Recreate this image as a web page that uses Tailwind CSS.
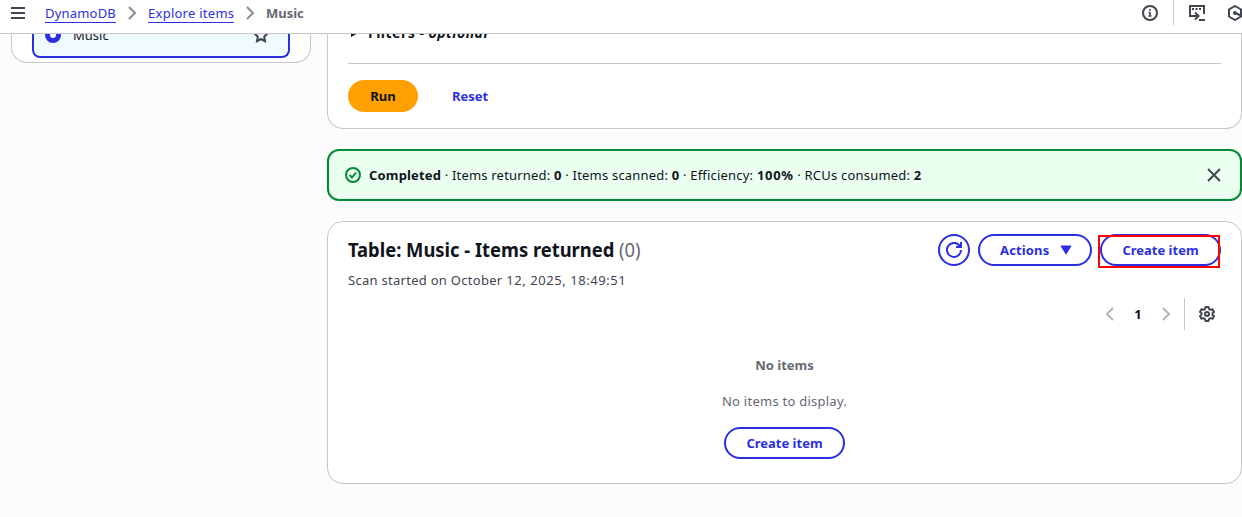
<!DOCTYPE html>
<html lang="en">
<head>
<meta charset="utf-8">
<title>DynamoDB - Explore items</title>
<script src="https://cdn.jsdelivr.net/npm/@tailwindcss/browser@4"></script>
</head>
<body class="w-[1242px] h-[517px] overflow-hidden bg-[#fcfcfd] font-['Noto_Sans',sans-serif] text-[13px] leading-5 text-[#0f141a] flex flex-col">
<header class="h-[34px] shrink-0 bg-white border-b border-[#c6c6cd] flex items-start">
  <svg class="w-4 h-4 ml-[10px] mt-[5px] text-[#424650]" viewBox="0 0 16 16" fill="none" stroke="currentColor" stroke-width="2"><path d="M1 3h14M1 8h14M1 13h14"/></svg>
  <nav class="flex items-start ml-[19px] mt-[3px]">
    <a class="w-[71px] h-5 whitespace-nowrap tracking-[0.2px] text-[#2b2fe0] border-b border-[#2b2fe0]">DynamoDB</a>
    <svg class="w-4 h-4 ml-2 mr-2 mt-[2px]" viewBox="0 0 16 16" fill="none" stroke="#8c8c94" stroke-width="2"><path d="M5 2l6 6-6 6"/></svg>
    <a class="w-[86px] h-5 whitespace-nowrap tracking-[0.26px] text-[#2b2fe0] border-b border-[#2b2fe0]">Explore items</a>
    <svg class="w-4 h-4 ml-2 mr-2 mt-[2px]" viewBox="0 0 16 16" fill="none" stroke="#8c8c94" stroke-width="2"><path d="M5 2l6 6-6 6"/></svg>
    <span class="font-bold text-[#656871]">Music</span>
  </nav>
  <div class="ml-auto flex items-start text-[#424650] w-[100px] shrink-0">
    <svg class="w-4 h-4 mt-[5px] shrink-0" viewBox="0 0 16 16" fill="none" stroke="currentColor" stroke-width="2"><circle cx="8" cy="8" r="7"/><path d="M8 7v4M6.500 11h3M6.500 7.500h1.500M8 4v2" stroke-width="1.500"/></svg>
    <div class="w-px h-[25px] bg-[#c6c6cd] ml-[15px] shrink-0"></div>
    <svg class="w-4 h-4 ml-[15px] mt-[5px] shrink-0" viewBox="0 0 16 16" fill="none" stroke="currentColor" stroke-width="2"><path d="M4 11H1V1h14v8M3 4h2M6.500 4h2M10 4h2M3 11h6M6 7.500l3.500 3.500L6 14.500M10 15h6"/></svg>
    <svg class="w-4 h-4 ml-[22px] mt-[5px] shrink-0" viewBox="0 0 16 16" fill="none" stroke="currentColor" stroke-width="2"><path d="M8 1l6 3.500v7L8 15l-6-3.500v-7z"/><circle cx="8" cy="8" r="2" fill="currentColor" stroke="none"/><path d="M8 8l6 2.500"/></svg>
  </div>
</header>
<main class="flex flex-1 min-h-0 items-start">
  <aside class="w-[300px] h-[29px] ml-[11px] shrink-0 bg-white border border-t-0 border-[#c6c6cd] rounded-b-[16px] overflow-hidden flex justify-center">
    <div class="w-[258px] h-6 bg-[#f0fbff] border-2 border-t-0 border-[#2b2fe0] rounded-b-lg flex items-start overflow-hidden">
      <div class="w-4 h-4 rounded-full border-[5px] border-[#2b2fe0] bg-white ml-[11px] -mt-[7px]"></div>
      <span class="ml-3 -mt-[9px]">Music</span>
      <svg class="w-4 h-4 ml-auto mr-[19px] -mt-[7px] text-[#424650]" viewBox="0 0 16 16" fill="none" stroke="currentColor" stroke-width="2"><path d="M8 2l2 4 4.500.500-3.300 3.200.8 4.500L8 12l-4 2.200.8-4.500L1.500 6.500 6 6z"/></svg>
    </div>
  </aside>
  <div class="w-[915px] ml-4 shrink-0 flex flex-col">
    <section class="h-[95px] bg-white border border-t-0 border-[#c6c6cd] rounded-b-[16px] px-5 overflow-hidden">
      <div class="h-[30px] border-b border-[#c6c6cd] flex items-start text-[14px] font-bold">
        <svg class="w-4 h-4 -mt-[9px]" viewBox="0 0 16 16"><path d="M3 3v9l8-4.500z" fill="#0f141a"/></svg>
        <span class="ml-1 -mt-[11px] whitespace-nowrap tracking-[0.5px]">Filters - <i>optional</i></span>
      </div>
      <div class="flex mt-4">
        <button class="w-[70px] h-8 rounded-full bg-[#ff9f00] font-bold">Run</button>
        <button class="w-[70px] h-8 ml-[17px] font-bold text-[#2b2fe0]">Reset</button>
      </div>
    </section>
    <section class="h-[52px] mt-5 bg-[#ebfff1] border-2 border-[#008a35] rounded-[12px] flex items-center pl-4 pr-[18px]">
      <svg class="w-4 h-4" viewBox="0 0 16 16" fill="none" stroke="#008a35" stroke-width="2"><circle cx="8" cy="8" r="7"/><path d="M4.500 8l2.500 2.500 4-5"/></svg>
      <p class="ml-2 whitespace-nowrap tracking-[0.2px]"><b class="tracking-[0.16px]">Completed</b> · Items returned: <b>0</b> · Items scanned: <b>0</b> · Efficiency: <b class="tracking-[0.7px]">100%</b> · RCUs consumed: <b>2</b></p>
      <svg class="w-4 h-4 ml-auto" viewBox="0 0 16 16" fill="none" stroke="#424650" stroke-width="2"><path d="M2 2l12 12M14 2L2 14"/></svg>
    </section>
    <section class="h-[263px] mt-5 bg-white border border-[#c6c6cd] rounded-[16px] px-5 pt-3 flex flex-col">
      <div class="flex h-[54px]">
        <div>
          <h2 class="text-[20px] leading-8 font-bold whitespace-nowrap origin-left scale-x-[0.918]">Table: Music - Items returned <span class="font-normal text-[#656871]">(0)</span></h2>
          <p class="mt-[4px] text-[#424650] whitespace-nowrap tracking-[0.4px]"><span class="tracking-[0.28px]">Scan started on October</span> <span class="tracking-[0.56px]">12, 2025, 18:49:51</span></p>
        </div>
        <div class="ml-auto flex gap-2 text-[#2b2fe0] font-bold">
          <button class="w-8 h-8 border-2 rounded-full flex items-center justify-center"><svg class="w-4 h-4" viewBox="0 0 16 16" fill="none" stroke="currentColor" stroke-width="2"><path d="M15 8a7 7 0 1 1-2-5l2 2M15 0v5h-5"/></svg></button>
          <button class="w-[114px] h-8 border-2 rounded-full flex items-center pl-5 gap-2"><span class="w-[50px] text-left tracking-[0.15px]">Actions</span><svg class="w-4 h-4" viewBox="0 0 16 16"><path d="M3 4h10l-5 8z" fill="currentColor" stroke="currentColor" stroke-linejoin="round"/></svg></button>
          <div class="relative">
            <button class="w-[121px] h-8 border-2 rounded-full">Create item</button>
            <div class="absolute -left-[2px] top-[1px] w-[122px] h-[33px] border-2 border-[#ff0000]"></div>
          </div>
        </div>
      </div>
      <div class="flex items-center justify-end h-8 mt-[10px]">
        <svg class="w-4 h-4" viewBox="0 0 16 16" fill="none" stroke="#b4b4bb" stroke-width="2"><path d="M11 2L5 8l6 6"/></svg>
        <span class="w-10 text-center font-bold">1</span>
        <svg class="w-4 h-4" viewBox="0 0 16 16" fill="none" stroke="#b4b4bb" stroke-width="2"><path d="M5 2l6 6-6 6"/></svg>
        <div class="w-px h-8 bg-[#c6c6cd] ml-[10px] mr-[14px]"></div>
        <svg class="w-4 h-4 mr-[6px] text-[#424650]" viewBox="0 0 16 16" fill="none" stroke="currentColor" stroke-width="2" stroke-linejoin="round"><path d="M6.500 1h3l.5 2 1.500.9 2-.6L15 5.900 13.500 7.300v1.400L15 10.100l-1.500 2.600-2-.6L10 13l-.5 2h-3L6 13l-1.500-.9-2 .6L1 10.100l1.500-1.400V7.300L1 5.900l1.500-2.600 2 .6L6 3z"/><circle cx="8" cy="8" r="2"/></svg>
      </div>
      <div class="flex flex-col items-center text-[#656871] mt-[25px]">
        <b>No items</b>
        <p class="mt-4 tracking-[0.25px]">No items to display.</p>
        <button class="w-[121px] h-8 mt-4 border-2 border-[#2b2fe0] text-[#2b2fe0] rounded-full font-bold">Create item</button>
      </div>
    </section>
  </div>
</main>
</body>
</html>
